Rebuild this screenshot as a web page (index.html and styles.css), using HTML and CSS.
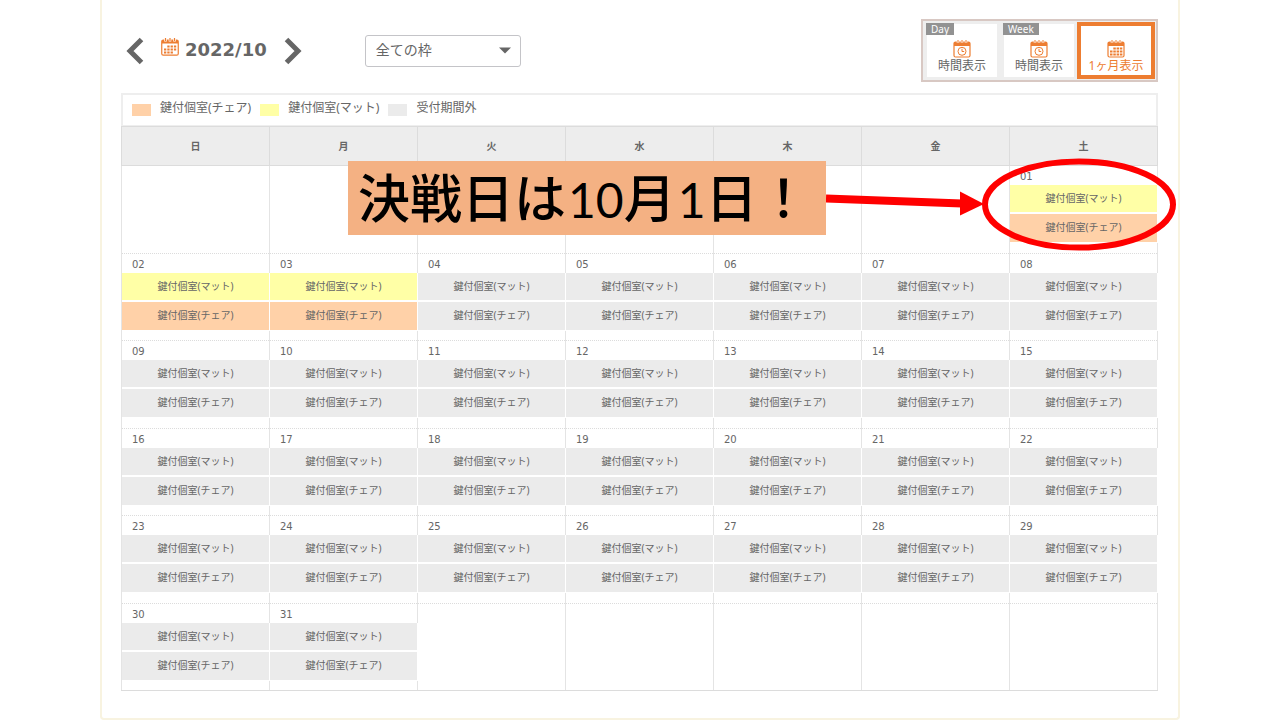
FILE: index.html
```html
<!DOCTYPE html>
<html lang="ja">
<head>
<meta charset="utf-8">
<title>予約カレンダー 2022/10</title>
<link rel="stylesheet" href="styles.css">
</head>
<body>
<main class="panel">
  <header class="toolbar">
    <div class="month-nav">
      <button class="nav-button" type="button" aria-label="前の月">
        <svg width="18" height="28" viewBox="0 0 18 28"><path d="M15.500 2.500 4 14l11.500 11.500" fill="none" stroke="#666" stroke-width="5"/></svg>
      </button>
      <h1 class="month-title">
        <svg width="18" height="18" viewBox="0 0 18 18" aria-hidden="true">
          <rect x=".75" y="2" width="16.500" height="15.200" rx="1.500" fill="#fff" stroke="#ed7d31" stroke-width="1.200"/>
          <path d="M1 2h16v3.500H1z" fill="#ed7d31"/>
          <path d="M4.500 0v3.500M9 0v3.500M13.500 0v3.500" stroke="#fff" stroke-width="2.600"/>
          <path d="M4.500 0v3M9 0v3M13.500 0v3" stroke="#ed7d31" stroke-width="1.200"/>
          <path d="M6.300 8.500h9M3 11.500h12.500M3 14.500h9" stroke="#ed7d31" stroke-width="2.200" stroke-dasharray="2.300 1"/>
        </svg>
        <span>2022/10</span>
      </h1>
      <button class="nav-button" type="button" aria-label="次の月">
        <svg width="18" height="28" viewBox="0 0 18 28"><path d="M2.500 2.500 14 14 2.500 25.500" fill="none" stroke="#666" stroke-width="5"/></svg>
      </button>
    </div>
    <div class="slot-filter">
      <select class="slot-select" aria-label="枠の絞り込み"><option>全ての枠</option></select>
      <svg class="slot-caret" width="12" height="7" viewBox="0 0 12 7" aria-hidden="true"><path d="M0 .5h12L6 6.500z" fill="#666"/></svg>
    </div>
    <nav class="views" aria-label="表示切替">
      <button class="view" type="button">
        <span class="view-tag">Day</span>
        <svg width="18" height="18" viewBox="0 0 18 18" aria-hidden="true">
          <rect x="1" y="2" width="16" height="15" rx="1.500" fill="#fff" stroke="#ed7d31" stroke-width="1.200"/>
          <path d="M1 2h16v4H1z" fill="#ed7d31"/><path d="M5 0v3M9 0v3M13 0v3" stroke="#fff" stroke-width="2.400"/><path d="M5 0v3M9 0v3M13 0v3" stroke="#ed7d31"/>
          <circle cx="9" cy="11.300" r="4" fill="none" stroke="#ed7d31"/><path d="M9 8.800v2.700h2.200" fill="none" stroke="#ed7d31"/>
        </svg>
        <span>時間表示</span>
      </button>
      <button class="view" type="button">
        <span class="view-tag">Week</span>
        <svg width="18" height="18" viewBox="0 0 18 18" aria-hidden="true">
          <rect x="1" y="2" width="16" height="15" rx="1.500" fill="#fff" stroke="#ed7d31" stroke-width="1.200"/>
          <path d="M1 2h16v4H1z" fill="#ed7d31"/><path d="M5 0v3M9 0v3M13 0v3" stroke="#fff" stroke-width="2.400"/><path d="M5 0v3M9 0v3M13 0v3" stroke="#ed7d31"/>
          <circle cx="9" cy="11.300" r="4" fill="none" stroke="#ed7d31"/><path d="M9 8.800v2.700h2.200" fill="none" stroke="#ed7d31"/>
        </svg>
        <span>時間表示</span>
      </button>
      <button class="view view-current" type="button" aria-pressed="true">
        <svg width="18" height="18" viewBox="0 0 18 18" aria-hidden="true">
          <rect x="1" y="2" width="16" height="15" rx="1.500" fill="#fff" stroke="#ed7d31" stroke-width="1.200"/>
          <path d="M1 2h16v4H1z" fill="#ed7d31"/><path d="M5 0v3M9 0v3M13 0v3" stroke="#fff" stroke-width="2.400"/><path d="M5 0v3M9 0v3M13 0v3" stroke="#ed7d31"/>
          <path d="M6.300 8.500h9M3 11.500h12.500M3 14.500h12.500" stroke="#ed7d31" stroke-width="2.200" stroke-dasharray="2.500 .8"/>
        </svg>
        <span>1ヶ月表示</span>
      </button>
    </nav>
  </header>

  <section class="calendar">
    <ul class="legend">
      <li class="legend-item"><span class="swatch chair"></span>鍵付個室(チェア)</li>
      <li class="legend-item"><span class="swatch mat"></span>鍵付個室(マット)</li>
      <li class="legend-item"><span class="swatch closed"></span>受付期間外</li>
    </ul>
    <table class="month">
      <thead>
        <tr><th scope="col">日</th><th scope="col">月</th><th scope="col">火</th><th scope="col">水</th><th scope="col">木</th><th scope="col">金</th><th scope="col">土</th></tr>
      </thead>
      <tbody id="weeks"></tbody>
    </table>

    <p class="banner">決戦日は<span class="banner-number">10</span>月<span class="banner-number">1</span>日！</p>
    <svg class="pointer" width="352" height="100" viewBox="0 0 352 100" aria-hidden="true">
      <path d="M0 43.500 136 48.500" stroke="#f00" stroke-width="8"/>
      <path d="M134 36.500v24L158 49z" fill="#f00"/>
      <ellipse cx="253" cy="49.500" rx="94" ry="43" fill="none" stroke="#f00" stroke-width="6"/>
    </svg>
  </section>
</main>
<script src="calendar.js"></script>
</body>
</html>
```

FILE: styles.css
```css
* {
  box-sizing: border-box;
}

body {
  margin: 0;
  background: #fff;
  color: #666;
  font-family: "Noto Sans", "Noto Sans CJK JP", sans-serif;
  font-size: 12px;
}

button,
select {
  font: inherit;
  color: inherit;
}

.panel {
  margin: 0 100px;
  padding: 19px 20px 27px 19px;
  border: 2px solid #f8f3e0;
  border-top: 0;
  border-radius: 0 0 4px 4px;
}

.toolbar {
  display: flex;
  align-items: center;
  margin-bottom: 11px;
}

.month-nav {
  display: flex;
  align-items: center;
  gap: 17px;
  padding-left: 5px;
}

.nav-button {
  display: flex;
  padding: 0;
  border: 0;
  background: none;
}

.month-title {
  display: flex;
  align-items: flex-start;
  gap: 6px;
  margin: 0;
  padding-bottom: 2px;
  font: bold 18px/24px "DejaVu Sans", sans-serif;
}

.slot-filter {
  position: relative;
  width: 156px;
  margin-left: 63px;
}

.slot-select {
  display: block;
  width: 100%;
  height: 32px;
  padding: 0 10px 2px;
  border: 1px solid #c4c4c8;
  border-radius: 3px;
  background: #fff;
  appearance: none;
  font-size: 14px;
}

.slot-caret {
  position: absolute;
  right: 10px;
  top: 12px;
  pointer-events: none;
}

.views {
  display: flex;
  gap: 7px;
  height: 63px;
  margin-left: auto;
  padding: 1px;
  padding-left: 4px;
  border: 2px solid #d8c8c3;
  background: #eee;
}

.view {
  position: relative;
  display: flex;
  flex-direction: column;
  align-items: center;
  width: 70px;
  margin: 2px 0;
  padding: 16px 0 0;
  border: 0;
  background: #fff;
  line-height: 16px;
}

.view-tag {
  position: absolute;
  left: -1px;
  top: -1px;
  padding: 0 5px;
  background: #929292;
  color: #fff;
  font-size: 10px;
  line-height: 12px;
}

.view-current {
  width: 78px;
  margin: 0 0 0 -4px;
  padding-top: 14px;
  border: 4px solid #ed7d31;
  color: #ed7d31;
}

.calendar {
  position: relative;
}

.legend {
  display: flex;
  gap: 9px;
  height: 33px;
  margin: 0;
  padding: 3px 9px 7px;
  border: 2px solid #eee;
  border-bottom-width: 1px;
  list-style: none;
}

.legend-item {
  display: flex;
  align-items: center;
  gap: 9px;
  line-height: 18px;
}

.swatch {
  width: 19px;
  height: 12px;
  margin-top: 3px;
}

.month {
  width: 100%;
  height: 565px;
  table-layout: fixed;
  border-collapse: collapse;
}

.month th {
  height: 39px;
  padding: 0 0 2px;
  border: 1px solid #dcdcdc;
  background: #ededed;
  font-size: 10px;
}

.month td {
  padding: 0;
  border: 1px solid #e4e4e4;
  border-top: 1px dotted #dcdcdc;
  border-bottom: 1px dotted #dcdcdc;
  vertical-align: top;
}

.month tr:last-child td {
  border-bottom: 1px solid #dcdcdc;
}

.date {
  display: block;
  height: 19px;
  padding: 3px 0 0 10px;
  font: 10px/16px "DejaVu Sans", sans-serif;
}

/* The white edge covers the column line beside each slot. */
.slot {
  position: relative;
  display: block;
  height: 28px;
  margin-right: -1px;
  border-right: 1px solid #fff;
  border-bottom: 1px solid #fff;
  font-size: 10px;
  line-height: 26px;
  text-align: center;
  text-decoration: none;
  color: inherit;
}

.slot + .slot {
  height: 30px;
  border-top: 1px solid #fff;
}

.chair {
  background: #ffd1a8;
}

.mat {
  background: #ffffa6;
}

.closed {
  background: #ebebeb;
}

.banner {
  position: absolute;
  top: 68px;
  right: 332px;
  width: 478px;
  height: 74px;
  margin: 0;
  padding: 0 10px;
  background: #f4b183;
  color: #000;
  font-family: "Noto Sans CJK JP", sans-serif;
  font-size: 52px;
  font-weight: 500;
  line-height: 70px;
  white-space: nowrap;
}

.banner-number {
  margin-left: 2px;
  font-family: Lato, sans-serif;
  font-size: 48px;
  font-weight: 400;
  line-height: 1;
}

.pointer {
  position: absolute;
  top: 62px;
  right: -20px;
  pointer-events: none;
}
```

FILE: calendar.js
```js
const weeks = document.getElementById("weeks");
const firstWeekday = 6;
const daysInMonth = 31;
const lastOpenDay = 3;
const kinds = [
  { name: "鍵付個室(マット)", style: "mat" },
  { name: "鍵付個室(チェア)", style: "chair" }
];

function createSlot(kind, open) {
  const slot = document.createElement(open ? "a" : "span");
  if (open) slot.href = "#";
  slot.className = "slot " + (open ? kind.style : "closed");
  slot.textContent = kind.name;
  return slot;
}

for (let start = 1 - firstWeekday; start <= daysInMonth; start += 7) {
  const row = weeks.insertRow();
  for (let day = start; day < start + 7; day++) {
    const cell = row.insertCell();
    if (day < 1 || day > daysInMonth) continue;
    const date = document.createElement("span");
    date.className = "date";
    date.textContent = String(day).padStart(2, "0");
    cell.append(date, ...kinds.map(kind => createSlot(kind, day <= lastOpenDay)));
  }
}
```
